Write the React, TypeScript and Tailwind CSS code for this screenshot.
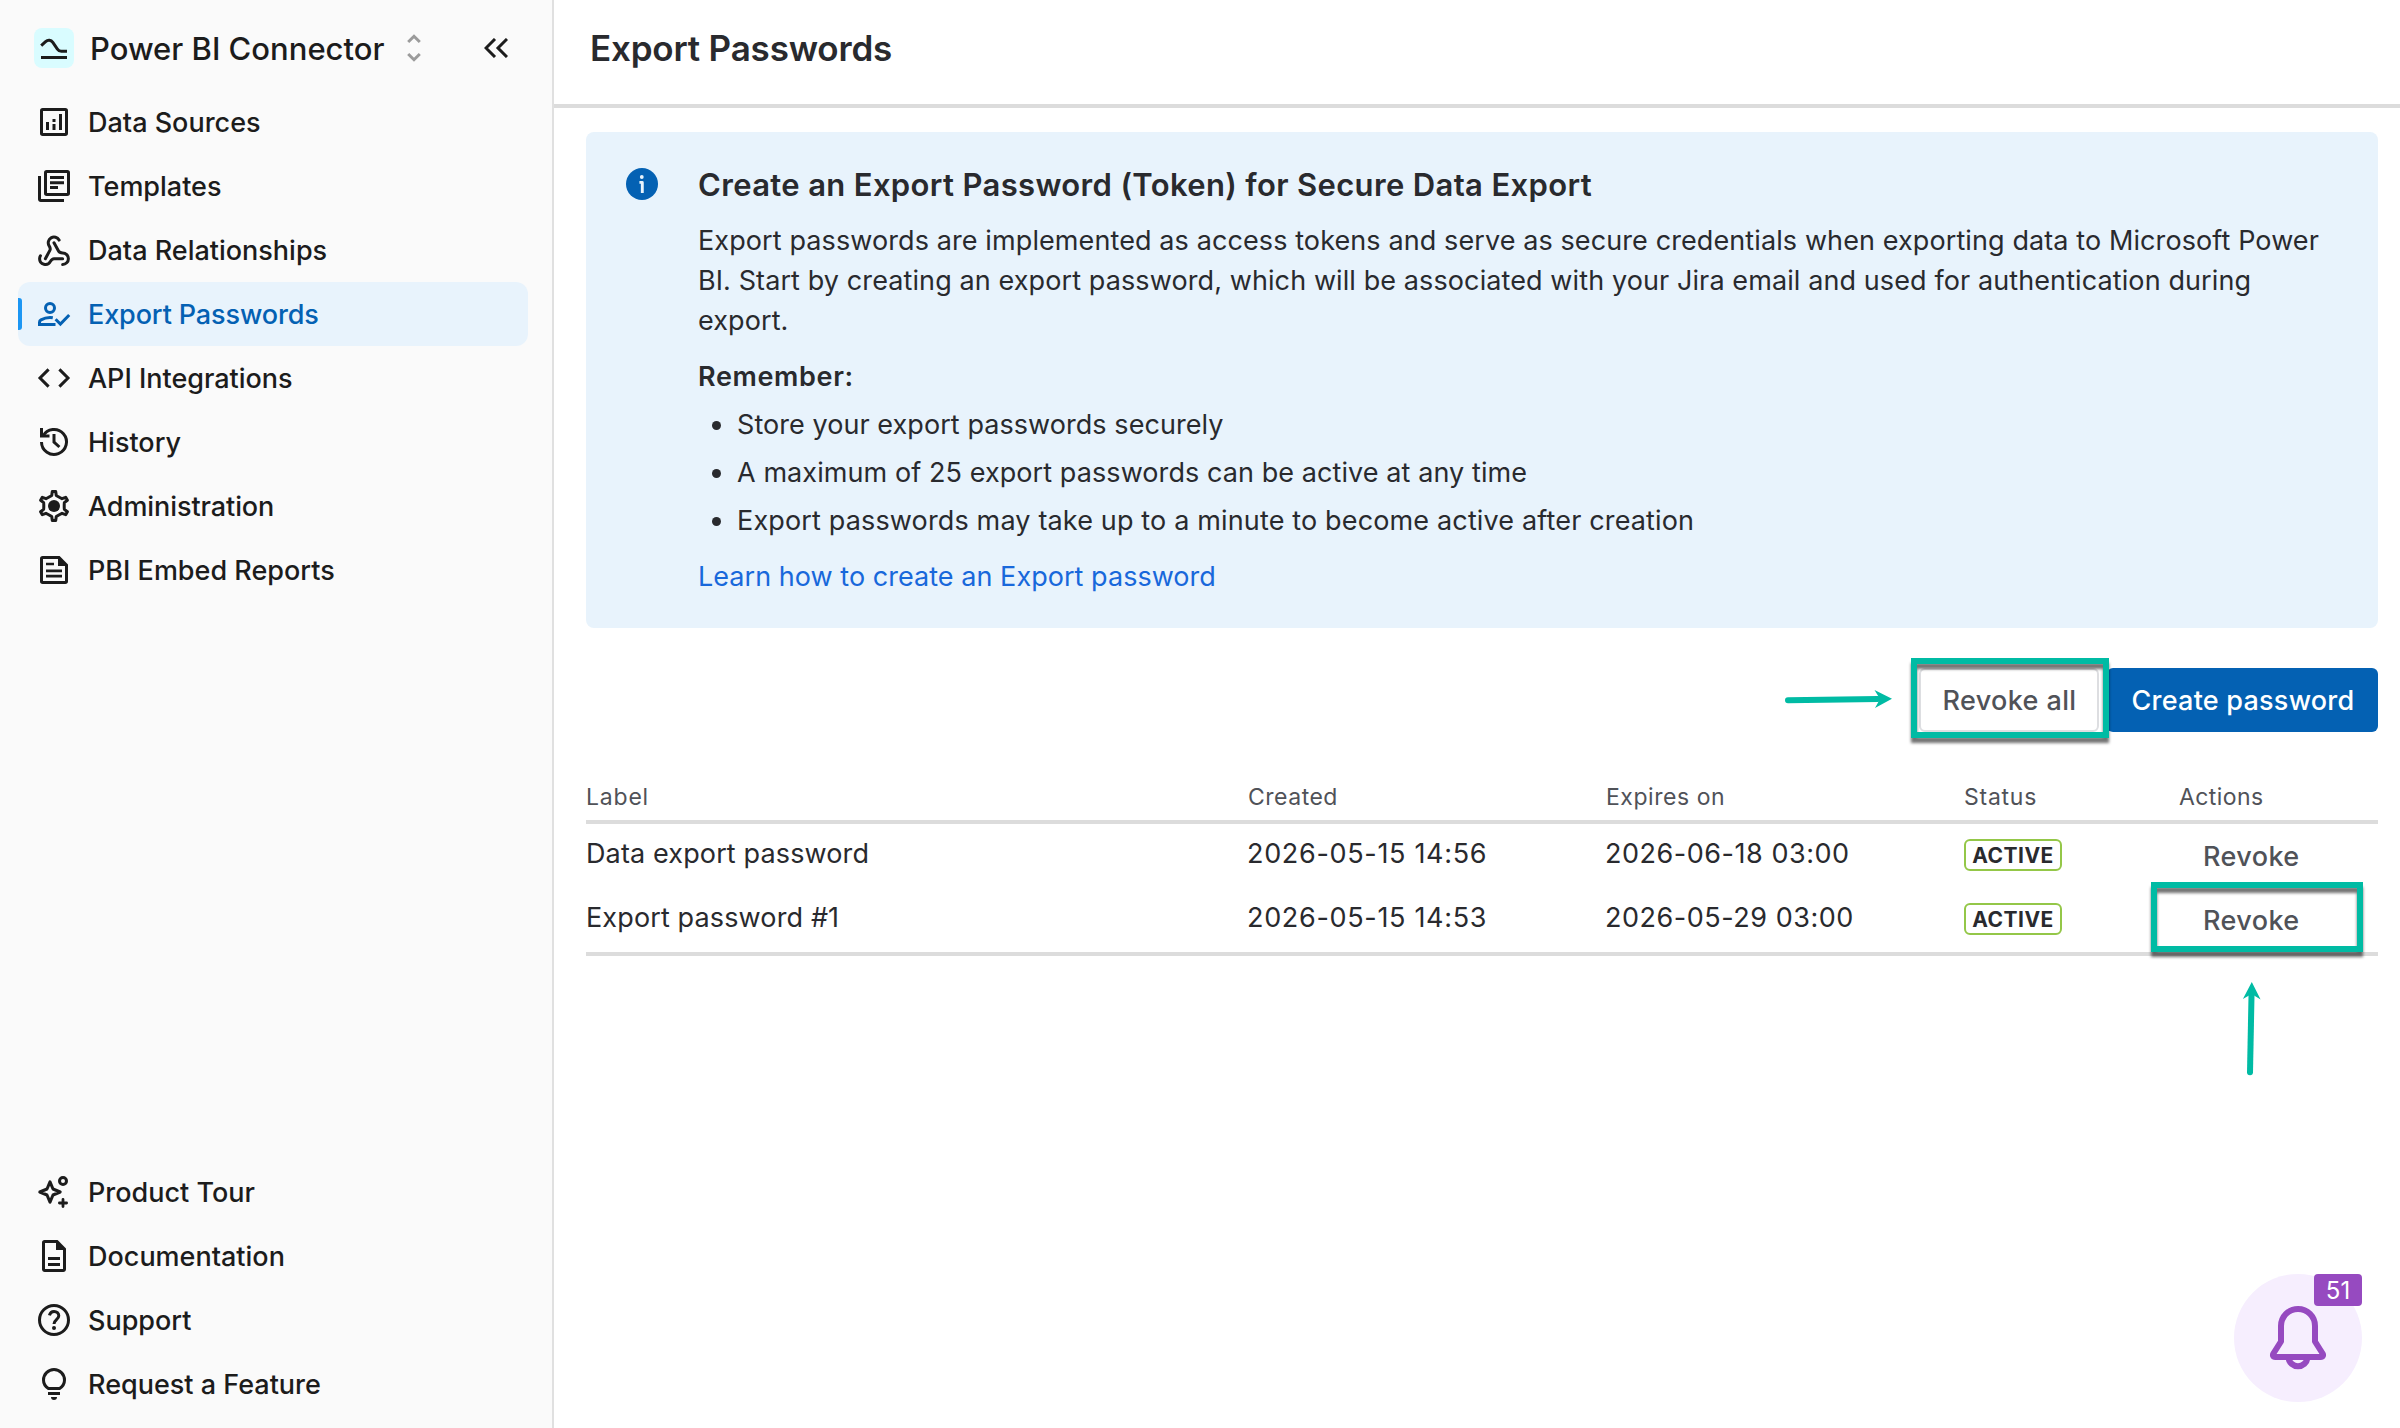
import type { ReactNode } from 'react'
import clsx from 'clsx'

type NavItem = {
  label: string
  icon: ReactNode
  active?: boolean
  tracking?: string
}

function Icon({ children }: { children: ReactNode }) {
  return (
    <svg viewBox="0 0 20 20" className="w-10 h-10 shrink-0" fill="none" stroke="currentColor" strokeWidth={1.5}>
      {children}
    </svg>
  )
}

const GEAR_ANGLES = [0, 60, 120, 180, 240, 300]

// One tooth is described once and rotated six times around the centre
const gearPath = GEAR_ANGLES.map((deg, i) => {
  const a = (deg * Math.PI) / 180
  return [[-2, -4.75], [-1.15, -5.3], [-0.85, -7.25], [0.85, -7.25], [1.15, -5.3], [2, -4.75]]
    .map(([x, y], j) => {
      const px = 10 + x * Math.cos(a) - y * Math.sin(a)
      const py = 10 + x * Math.sin(a) + y * Math.cos(a)
      return `${i === 0 && j === 0 ? 'M' : 'L'}${px.toFixed(2)} ${py.toFixed(2)}`
    })
    .join('')
}).join('') + 'Z'

const mainNav: NavItem[] = [
  {
    label: 'Data Sources',
    icon: (
      <Icon>
        <rect x="3.75" y="3.75" width="12.5" height="12.5" rx="0.6" />
        <path d="M6.75 10v4M10 11v3M10 8.5V10M13.25 6v8" />
      </Icon>
    ),
  },
  {
    label: 'Templates',
    icon: (
      <Icon>
        <rect x="5.75" y="2.75" width="11.5" height="11.5" rx="0.6" />
        <path d="M8 5.75h7M8 8.4h7M8 10.75h4" />
        <path d="M2.75 5v11.65a.6.6 0 0 0 .6.6H15" />
      </Icon>
    ),
  },
  {
    label: 'Data Relationships',
    icon: (
      <Icon>
        <g transform="translate(1.36 2.1) scale(.72)" strokeWidth={2.1} strokeLinecap="round">
          <path d="M18 16.98h-5.99c-1.1 0-1.95.94-2.48 1.9A4 4 0 0 1 2 17c.01-.7.2-1.4.57-2" />
          <path d="m6 17 3.13-5.78c.53-.97.1-2.18-.5-3.1a4 4 0 1 1 6.89-4.06" />
          <path d="m12 6 3.13 5.73C15.66 12.7 16.9 13 18 13a4 4 0 0 1 0 8" />
        </g>
      </Icon>
    ),
  },
  {
    label: 'Export Passwords',
    active: true,
    tracking: 'tracking-[-0.12px]',
    icon: (
      <Icon>
        <circle cx="8" cy="7" r="2.25" />
        <path d="M9.4 11.9C8.9 11.8 8.4 11.75 8 11.75c-1.8 0-3.3.5-4.5 1.2-.5.3-.75.7-.75 1.2v1.1h8" />
        <path d="M10.8 12.6l2.4 2.4 4.4-4.5" />
      </Icon>
    ),
  },
  {
    label: 'API Integrations',
    tracking: 'tracking-[-0.02px]',
    icon: (
      <Icon>
        <path d="M7.3 5.7L3 10l4.3 4.3M12.7 5.7L17 10l-4.3 4.3" />
      </Icon>
    ),
  },
  {
    label: 'History',
    icon: (
      <Icon>
        <path d="M3.75 3v4h4" />
        <path d="M4.5 7A6.25 6.25 0 1 1 3.75 10" />
        <path d="M10 6v4l2.7 2.5" />
      </Icon>
    ),
  },
  {
    label: 'Administration',
    tracking: 'tracking-[-0.08px]',
    icon: (
      <Icon>
        <path d={gearPath} strokeLinejoin="round" />
        <circle cx="10" cy="10" r="3" fill="currentColor" stroke="none" />
      </Icon>
    ),
  },
  {
    label: 'PBI Embed Reports',
    icon: (
      <Icon>
        <path d="M12.5 3.75H4.35a.6.6 0 0 0-.6.6v11.3a.6.6 0 0 0 .6.6h11.3a.6.6 0 0 0 .6-.6V7.5z" />
        <path d="M12 3.2V8h4.8z" fill="currentColor" stroke="none" />
        <path d="M6 7h4M6 10.4h8M6 13.1h8" strokeWidth={1.35} />
      </Icon>
    ),
  },
]

const footerNav: NavItem[] = [
  {
    label: 'Product Tour',
    icon: (
      <Icon>
        <path d="M8 4.9l1.5 3.6L13.1 10l-3.6 1.5L8 15.1l-1.5-3.6L2.9 10l3.6-1.5z" strokeLinejoin="round" />
        <circle cx="14.5" cy="4.5" r="1.75" />
        <path d="M14.5 13.7v3.6M12.7 15.5h3.6" strokeLinecap="round" strokeWidth={1.4} />
      </Icon>
    ),
  },
  {
    label: 'Documentation',
    icon: (
      <Icon>
        <path d="M11.5 2.75H5.35a.6.6 0 0 0-.6.6v13.3a.6.6 0 0 0 .6.6h9.3a.6.6 0 0 0 .6-.6V6.5z" />
        <path d="M11 2.2V7h4.8z" fill="currentColor" stroke="none" />
        <path d="M7 11.25h6M7 14.25h6" />
      </Icon>
    ),
  },
  {
    label: 'Support',
    icon: (
      <Icon>
        <circle cx="10" cy="10" r="7.25" />
        <path d="M7.7 7.7C8 6.5 8.9 5.7 10 5.7c1.4 0 2.4.9 2.4 2.2 0 1.9-2.4 2-2.4 4.1" />
        <circle cx="10" cy="14" r="1" fill="currentColor" stroke="none" />
      </Icon>
    ),
  },
  {
    label: 'Request a Feature',
    icon: (
      <Icon>
        <path d="M7.2 12.25C5.7 11.3 4.75 9.8 4.75 8a5.25 5.25 0 0 1 10.5 0c0 1.8-.95 3.3-2.45 4.25z" />
        <path d="M7 14.75h6" />
        <path d="M8.5 16.5h3a1.5 1.5 0 0 1-3 0z" fill="currentColor" stroke="none" />
      </Icon>
    ),
  },
]

const passwords = [
  { label: 'Data export password', created: '2026-05-15 14:56', expires: '2026-06-18 03:00' },
  { label: 'Export password #1', created: '2026-05-15 14:53', expires: '2026-05-29 03:00' },
]

const ROW_GRID = 'grid grid-cols-[661px_358px_359px_215px_199px]'
const HIGHLIGHT =
  'absolute border-[6px] border-[#00bba4] pointer-events-none drop-shadow-[0_5px_1.5px_rgba(0,0,0,0.55)]'

function NavList({ items }: { items: NavItem[] }) {
  return (
    <nav className="flex flex-col pl-[18px] pr-6">
      {items.map((item) => (
        <a
          key={item.label}
          className={clsx(
            'flex items-center h-16 rounded-xl relative pl-4 gap-3.5 text-[27px] font-medium whitespace-nowrap',
            item.active ? 'bg-[#e8f3fc] text-[#0461b3]' : 'text-[#1c1c1c]',
            item.tracking ?? 'tracking-normal'
          )}
        >
          {item.active && <span className="absolute left-0 top-4 w-1 h-8 rounded-r-[3px] bg-[#1c96f3]" />}
          {item.icon}
          <span className="pt-0.5">{item.label}</span>
        </a>
      ))}
    </nav>
  )
}

function Sidebar() {
  return (
    <aside className="flex flex-col w-[554px] shrink-0 bg-[#fafafa] border-r-2 border-[#e0e0e0] pb-3">
      <div className="flex items-center h-[90px] pl-[34px] pr-11 pt-1.5">
        <svg viewBox="0 0 40 40" className="w-10 h-10 rounded-lg bg-[#d9fcff]" fill="none" stroke="#1c1c1c" strokeWidth={3}>
          <path d="M7.2 17.6l4.4-4c2.4-2.2 5.4-1.8 7.2.8l4.6 6.7c1.2 1.7 2.2 2.2 4 2.2h5.6" />
          <path d="M7 29.5h26" />
        </svg>
        <span className="ml-4 pt-0.5 text-[31px] font-medium text-[#1c1c1c] whitespace-nowrap">Power BI Connector</span>
        <svg viewBox="0 0 14 28" className="ml-[23px] w-3.5 h-7" fill="none" stroke="#9b9b9b" strokeWidth={3}>
          <path d="M1.2 8L7 2.3 12.8 8M1.2 20L7 25.7l5.8-5.7" />
        </svg>
        <svg viewBox="0 0 24 20" className="ml-auto w-6 h-5" fill="none" stroke="#1c1c1c" strokeWidth={3}>
          <path d="M11 1L2 10l9 9M23 1l-9 9 9 9" />
        </svg>
      </div>
      <NavList items={mainNav} />
      <div className="mt-auto">
        <NavList items={footerNav} />
      </div>
    </aside>
  )
}

function InfoPanel() {
  return (
    <section className="flex ml-8 mr-[22px] rounded-lg bg-[#e8f3fc] pt-8 pb-[31px] pl-10 text-[27px] leading-10 text-[#292a2e]">
      <svg viewBox="0 0 32 32" className="w-8 h-8 mt-1 shrink-0">
        <circle cx="16" cy="16" r="16" fill="#0461b3" />
        <circle cx="15.8" cy="9" r="1.9" fill="#e8f3fc" />
        <path d="M13.4 14.4h2.9V25" fill="none" stroke="#e8f3fc" strokeWidth={2.9} strokeLinejoin="round" />
      </svg>
      <div className="ml-10 whitespace-nowrap">
        <h2 className="text-[31px] leading-[42px] font-semibold tracking-[0.35px]">
          Create an Export Password (Token) for Secure Data Export
        </h2>
        <p className="mt-[15px] tracking-[0.1px]">
          Export passwords are implemented as access tokens and serve as secure credentials when exporting data to Microsoft Power
          <br />
          BI. Start by creating an export password, which will be associated with your Jira email and used for authentication during
          <br />
          export.
        </p>
        <p className="mt-4 font-semibold tracking-[0.65px]">Remember:</p>
        <ul className="mt-2 flex flex-col gap-2">
          {[
            ['Store your export passwords securely', 'tracking-[0.06px]'],
            ['A maximum of 25 export passwords can be active at any time', 'tracking-[0.08px]'],
            ['Export passwords may take up to a minute to become active after creation', 'tracking-[0.15px]'],
          ].map(([text, tracking]) => (
            <li key={text} className={clsx('flex items-center', tracking)}>
              <span className="ml-3.5 mr-4 w-[9px] h-[9px] rounded-full bg-[#292a2e]" />
              {text}
            </li>
          ))}
        </ul>
        <a className="block mt-4 text-[#1868db] tracking-[0.04px]">Learn how to create an Export password</a>
      </div>
    </section>
  )
}

function Toolbar() {
  return (
    <div className="flex justify-end gap-2 mt-10 pr-[22px] text-[27px] font-medium">
      {/* The callout is ordered after the blue button so that its shadow falls on it */}
      <button className="w-[271px] h-16 pt-0.5 pl-px rounded-md bg-[#0461b3] text-white tracking-[0.23px] order-2">
        Create password
      </button>
      <div className="relative order-1">
        <button className="w-[180px] h-16 pt-0.5 pl-px rounded-md border-2 border-[#dddee1] text-[#505258] tracking-[0.38px]">
          Revoke all
        </button>
        <div className={clsx(HIGHLIGHT, '-left-2 -right-2.5 -top-2.5 -bottom-1.5')} />
        <svg viewBox="0 0 108 20" className="absolute -left-[135px] top-[21px] w-[108px] h-5 overflow-visible" fill="#00bba4">
          <path d="M4 11.3L94 9.9" stroke="#00bba4" strokeWidth={6} strokeLinecap="round" />
          <path d="M108 9.7L90.5 1l5.5 8.9-5 9.1z" />
        </svg>
      </div>
    </div>
  )
}

function PasswordTable() {
  return (
    <div className="ml-8 mr-[22px] mt-[41px] border-b-4 border-[#dcdcdc]">
      <div className={clsx(ROW_GRID, 'h-[51px] border-b-4 border-[#dcdcdc] text-[23px] leading-[49px] text-[#505258]')}>
        <span className="tracking-[0.8px]">Label</span>
        <span className="pl-px tracking-[0.5px]">Created</span>
        <span className="pl-px tracking-[0.55px]">Expires on</span>
        <span className="tracking-[0.75px]">Status</span>
        <span className="tracking-[0.42px]">Actions</span>
      </div>
      {passwords.map((row, i) => (
        <div key={row.label} className={clsx(ROW_GRID, 'h-16 text-[27px] leading-[60px] text-[#292a2e]')}>
          <span className="tracking-[0.13px]">{row.label}</span>
          <span className="tracking-[0.68px]">{row.created}</span>
          <span className="tracking-[0.53px]">{row.expires}</span>
          <span className="flex">
            <span className="mt-[15px] flex items-center justify-center w-[98px] h-8 rounded-md border-2 border-[#94c748] text-[21px] leading-none font-bold tracking-[0.5px]">
              ACTIVE
            </span>
          </span>
          <div className="relative">
            <button className="ml-6 h-16 block leading-[66px] font-medium text-[#505258] tracking-[0.4px]">Revoke</button>
            {i === 1 && (
              <>
                <div className={clsx(HIGHLIGHT, '-left-7 -top-1.5 w-[212px] h-[70px]')} />
                <svg viewBox="0 0 20 96" className="absolute left-[63px] top-[94px] w-5 h-24 overflow-visible" fill="#00bba4">
                  <path d="M8 90.2L9.5 14" stroke="#00bba4" strokeWidth={6} strokeLinecap="round" />
                  <path d="M9.8 0L18.6 17.5 9.6 12 .9 17z" />
                </svg>
              </>
            )}
          </div>
        </div>
      ))}
    </div>
  )
}

function NotificationBell() {
  return (
    <div className="absolute right-[38px] bottom-[26px] w-32 h-32 rounded-full bg-[#f6eefe]">
      <svg viewBox="0 0 128 128" className="w-32 h-32" fill="none" stroke="#964ac0" strokeWidth={6} strokeLinejoin="round">
        <path d="M47 52a17 17 0 0 1 34 0v15.5l7.6 12c1 1.7.2 3.5-1.8 3.5H41.2c-2 0-2.8-1.8-1.8-3.5l7.6-12z" />
        <path d="M54.5 84a9.6 9.6 0 0 0 19 0" />
      </svg>
      <span className="absolute right-0 top-0 w-12 h-8 rounded bg-[#964ac0] text-white text-[24px] leading-[34px] text-center">
        51
      </span>
    </div>
  )
}

export default function App() {
  return (
    <div className="relative flex w-[2400px] h-[1428px] overflow-hidden bg-white font-['Inter',sans-serif]">
      <Sidebar />
      <main className="flex-1 min-w-0">
        <header className="flex items-center h-[108px] border-b-4 border-[#dcdcdc] pl-9 pb-2 mb-6">
          <h1 className="text-[35px] font-semibold tracking-[-0.19px] text-[#292a2e]">Export Passwords</h1>
        </header>
        <InfoPanel />
        <Toolbar />
        <PasswordTable />
      </main>
      <NotificationBell />
    </div>
  )
}
